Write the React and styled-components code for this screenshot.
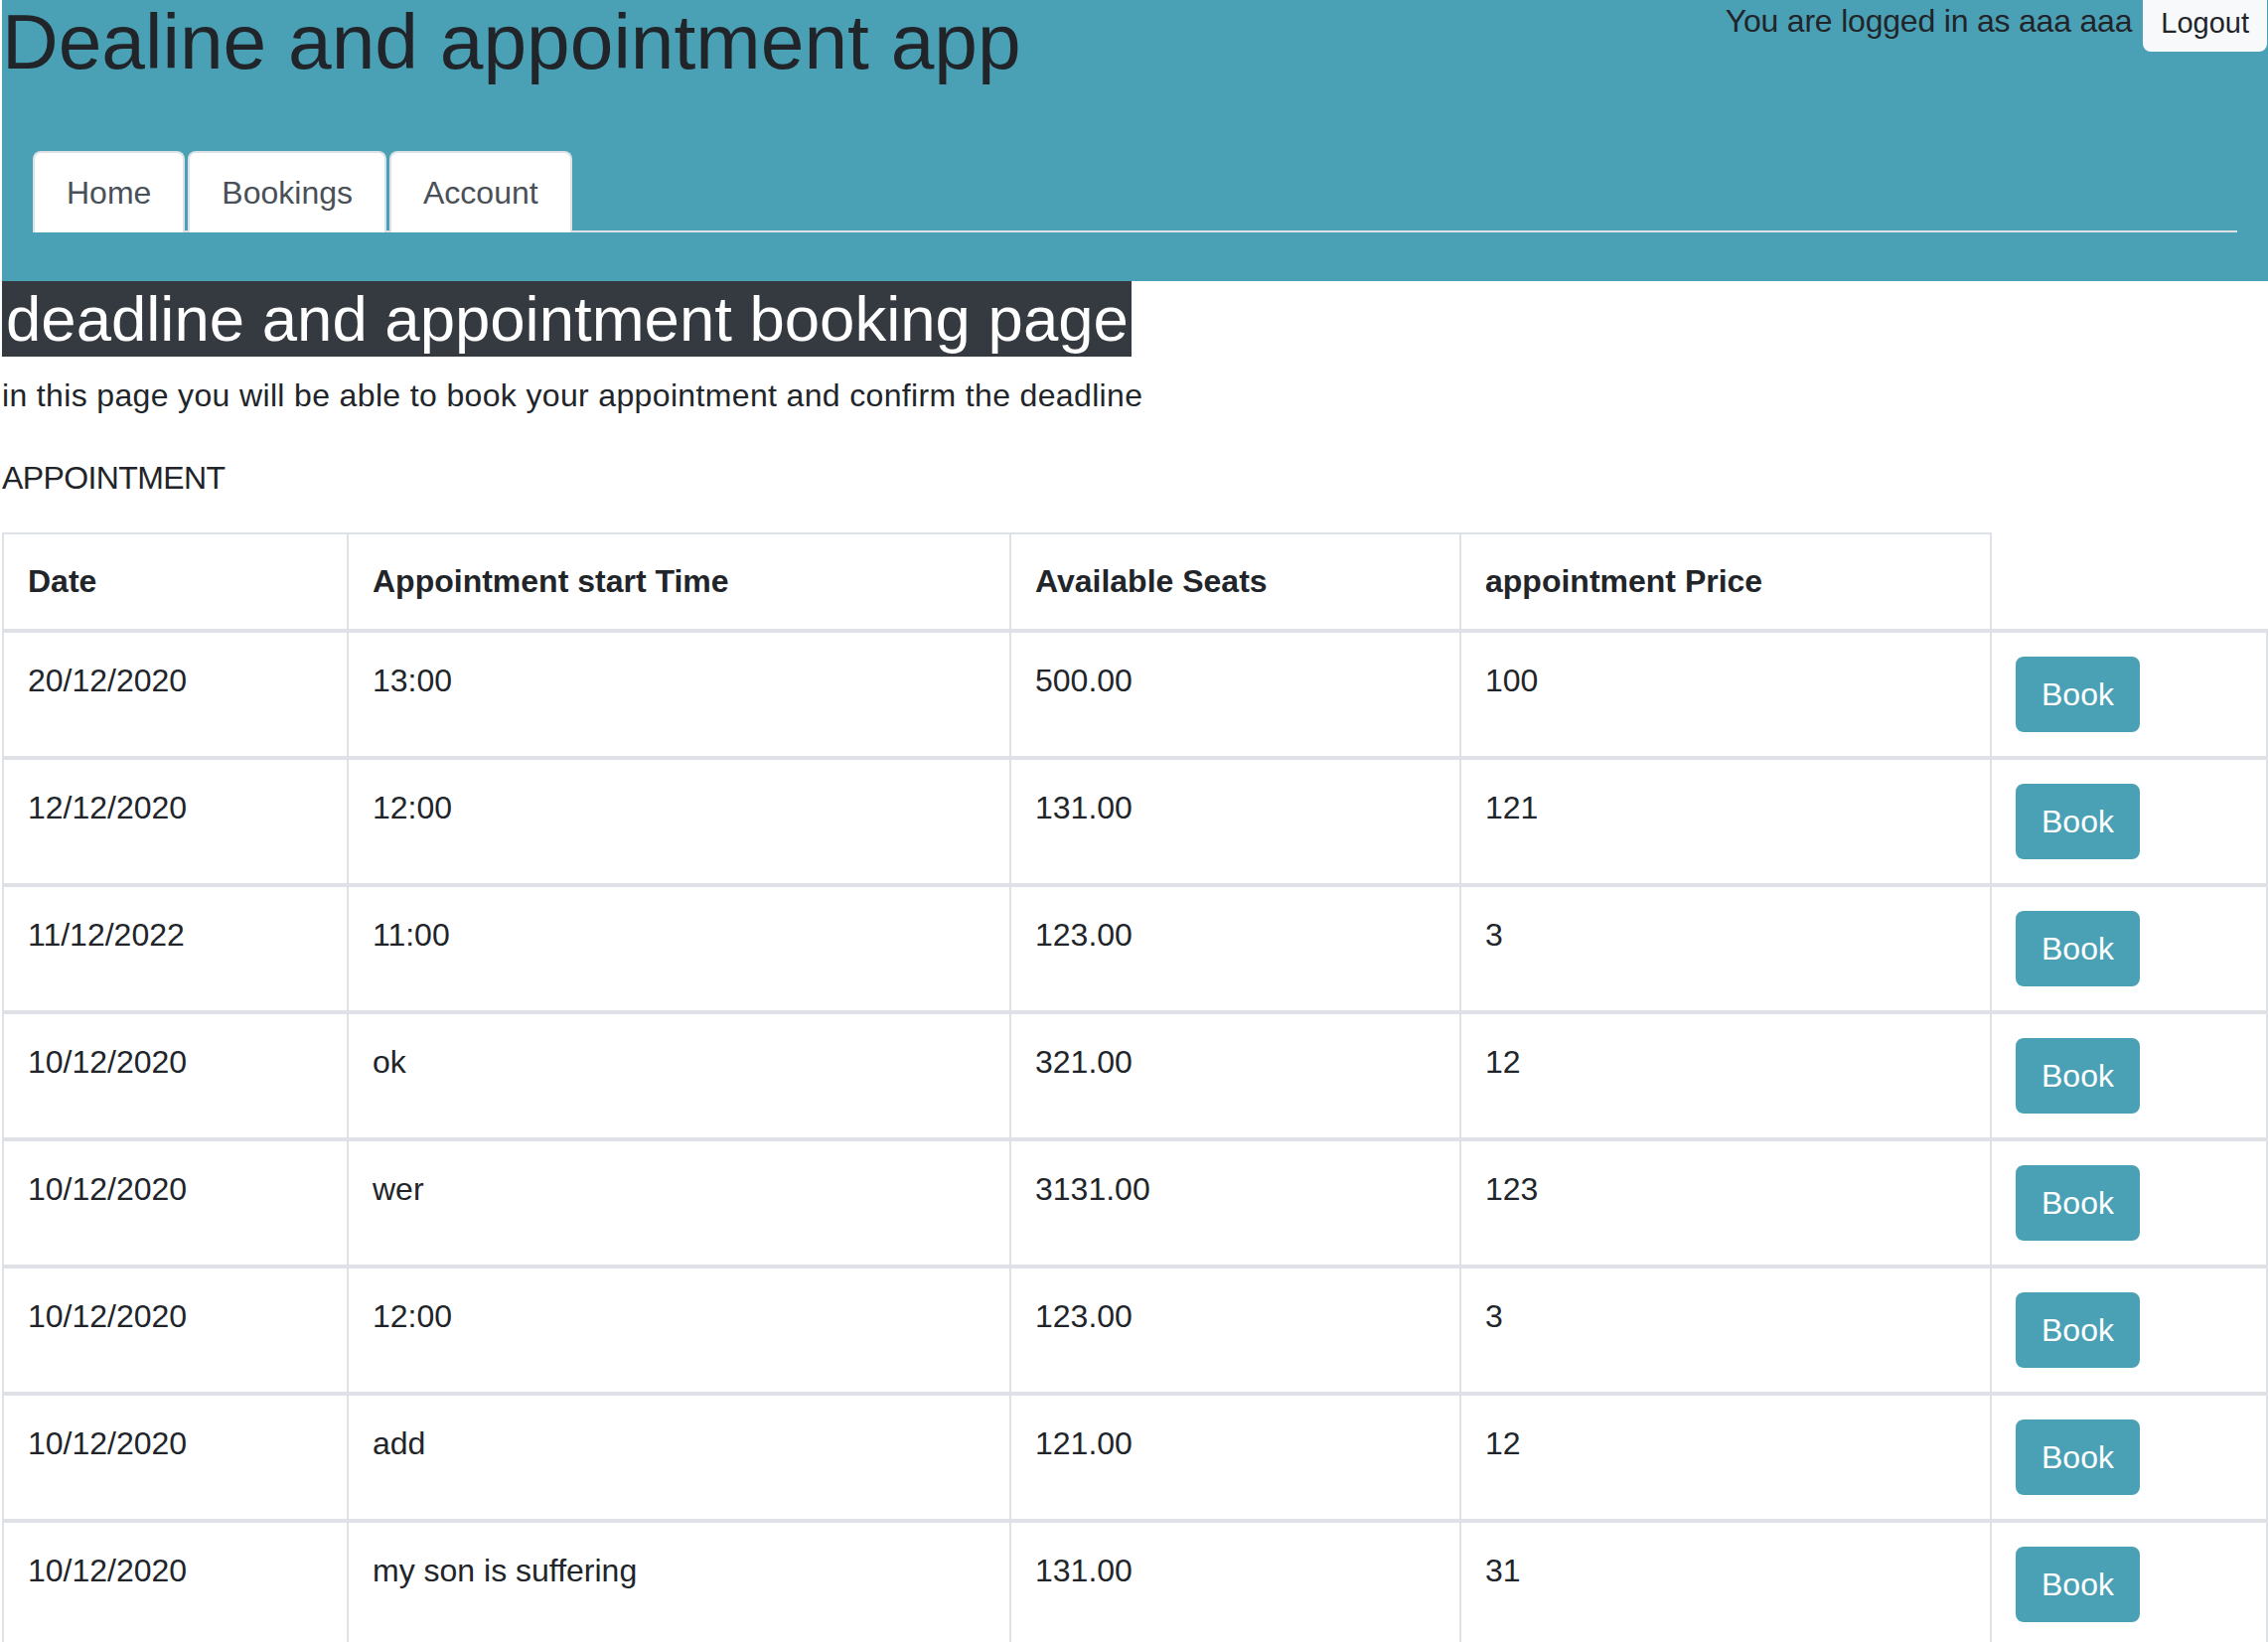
import React from "react";
import styled, { createGlobalStyle } from "styled-components";

const GlobalStyle = createGlobalStyle`
  body {
    margin: 0;
    font-family: "Liberation Sans", Arial, sans-serif;
    color: #212529;
    background: #ffffff;
  }
  * { box-sizing: border-box; }
`;

const PAGE = styled.div`
  padding-left: 2px;
`;

const HEADER = styled.header`
  background-color: #4aa1b6;
  padding-bottom: 49px;
`;

const HEADER_TOP = styled.div`
  display: flex;
  justify-content: space-between;
  align-items: flex-start;
`;

const APP_TITLE = styled.h1`
  margin: 0;
  font-size: 78.5px;
  font-weight: 500;
  line-height: 84px;
  color: #212529;
`;

const USER_BOX = styled.div`
  display: flex;
  align-items: flex-start;
  gap: 11px;
  margin-right: 1px;
`;

const USER_TEXT = styled.span`
  padding-top: 1px;
  font-size: 32px;
  line-height: 40px;
  letter-spacing: -0.2px;
  color: #212529;
`;

const LOGOUT_BUTTON = styled.button`
  height: 52px;
  padding: 3px 18px 9px;
  border: none;
  border-radius: 0 0 8px 8px;
  background-color: #f8f9fa;
  font-family: inherit;
  font-size: 29px;
  line-height: 40px;
  color: #212529;
`;

const TABS = styled.nav`
  display: flex;
  gap: 3px;
  margin: 68px 31px 0 31px;
  border-bottom: 2px solid #dee2e6;
`;

const TAB = styled.a`
  display: block;
  margin-bottom: -2px;
  padding: 16px 32px;
  border: 2px solid #dee2e6;
  border-bottom: none;
  border-radius: 8px 8px 0 0;
  background-color: #ffffff;
  font-size: 32px;
  line-height: 48px;
  color: #495057;
  text-decoration: none;
`;

const PAGE_TITLE = styled.h2`
  display: inline-block;
  margin: 0;
  padding: 0 3px 0 4px;
  background-color: #343a40;
  color: #ffffff;
  font-size: 63.5px;
  font-weight: 500;
  line-height: 76px;
`;

const TEXT = styled.p`
  margin: ${(props) => props.$top}px 0 ${(props) => props.$bottom}px;
  font-size: 32px;
  line-height: 48px;
  letter-spacing: ${(props) => props.$spacing || 0}px;
`;

const TABLE = styled.table`
  width: 100%;
  table-layout: fixed;
  border-collapse: collapse;
  font-size: 32px;
  line-height: 48px;
`;

const COL = styled.col`
  width: ${(props) => props.$w}px;
`;

const TH = styled.th`
  padding: 23px 24px 24px;
  border: 2px solid #dee2e6;
  border-bottom-width: 4px;
  text-align: left;
  vertical-align: top;
  font-weight: 700;
`;

const TD = styled.td`
  padding: 24px;
  border: 2px solid #dee2e6;
  border-top-width: 4px;
  vertical-align: ${(props) => (props.$middle ? "middle" : "top")};
`;

const BOOK_BUTTON = styled.button`
  display: block;
  padding: 12px 24px;
  border: 2px solid #4aa1b6;
  border-radius: 8px;
  background-color: #4aa1b6;
  color: #ffffff;
  font-family: inherit;
  font-size: 32px;
  line-height: 48px;
`;

const rows = [
  { id: 1, date: "20/12/2020", time: "13:00", seats: "500.00", price: "100" },
  { id: 2, date: "12/12/2020", time: "12:00", seats: "131.00", price: "121" },
  { id: 3, date: "11/12/2022", time: "11:00", seats: "123.00", price: "3" },
  { id: 4, date: "10/12/2020", time: "ok", seats: "321.00", price: "12" },
  { id: 5, date: "10/12/2020", time: "wer", seats: "3131.00", price: "123" },
  { id: 6, date: "10/12/2020", time: "12:00", seats: "123.00", price: "3" },
  { id: 7, date: "10/12/2020", time: "add", seats: "121.00", price: "12" },
  {
    id: 8,
    date: "10/12/2020",
    time: "my son is suffering",
    seats: "131.00",
    price: "31",
  },
];

const App = () => {
  return (
    <PAGE>
      <GlobalStyle />
      <HEADER>
        <HEADER_TOP>
          <APP_TITLE>Dealine and appointment app</APP_TITLE>
          <USER_BOX>
            <USER_TEXT>You are logged in as aaa aaa</USER_TEXT>
            <LOGOUT_BUTTON>Logout</LOGOUT_BUTTON>
          </USER_BOX>
        </HEADER_TOP>
        <TABS>
          <TAB href="#">Home</TAB>
          <TAB href="#">Bookings</TAB>
          <TAB href="#">Account</TAB>
        </TABS>
      </HEADER>

      <PAGE_TITLE>deadline and appointment booking page</PAGE_TITLE>
      <TEXT $top={15} $bottom={35} $spacing={0.35}>
        in this page you will be able to book your appointment and confirm the
        deadline
      </TEXT>
      <TEXT $top={0} $bottom={31} $spacing={-0.6}>
        APPOINTMENT
      </TEXT>

      <TABLE>
        <colgroup>
          <COL $w={347} />
          <COL $w={667} />
          <COL $w={453} />
          <COL $w={534} />
          <COL $w={278} />
        </colgroup>
        <thead>
          <tr>
            <TH>Date</TH>
            <TH>Appointment start Time</TH>
            <TH>Available Seats</TH>
            <TH>appointment Price</TH>
          </tr>
        </thead>
        <tbody>
          {rows.map((row) => (
            <tr key={row.id}>
              <TD>{row.date}</TD>
              <TD>{row.time}</TD>
              <TD>{row.seats}</TD>
              <TD>{row.price}</TD>
              <TD $middle>
                <BOOK_BUTTON>Book</BOOK_BUTTON>
              </TD>
            </tr>
          ))}
        </tbody>
      </TABLE>
    </PAGE>
  );
};

export default App;
